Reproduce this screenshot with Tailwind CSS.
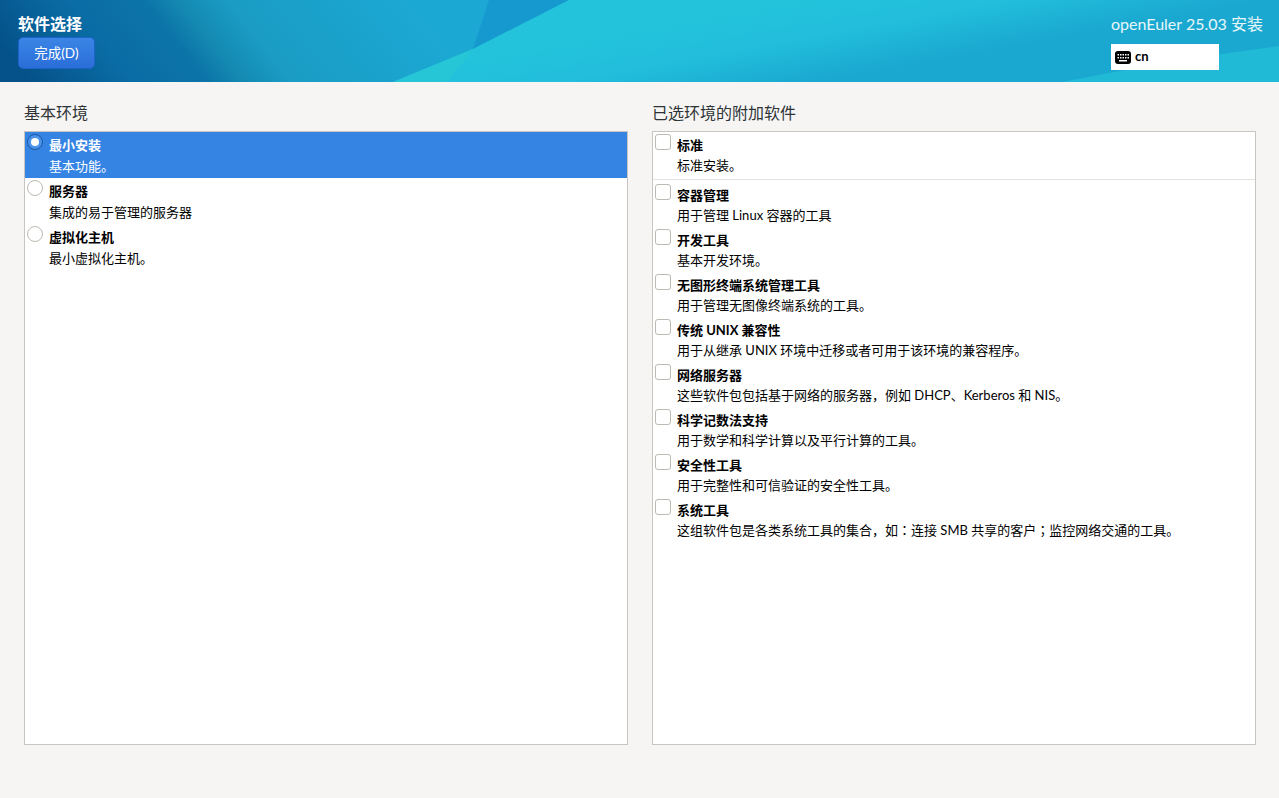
<!DOCTYPE html>
<html lang="zh-CN">
  <head>
    <meta charset="UTF-8" />
    <title>软件选择</title>
    <script src="https://cdn.jsdelivr.net/npm/@tailwindcss/browser@4"></script>
  </head>
  <body class="w-[1279px] h-[798px] overflow-hidden bg-[#f6f5f4] text-black font-['Lato','Noto_Sans_CJK_SC',sans-serif] text-[13px]">
    <!-- Header -->
    <header class="relative h-[82px] overflow-hidden flex justify-between text-white">
      <svg class="absolute inset-0" width="1279" height="82" viewBox="0 0 1279 82" preserveAspectRatio="none">
        <defs>
          <linearGradient id="base" gradientUnits="userSpaceOnUse" x1="0" y1="41" x2="300" y2="-197">
            <stop offset="0" stop-color="#05528a" />
            <stop offset="0.2" stop-color="#0a6ca4" />
            <stop offset="0.36" stop-color="#0c74a8" />
            <stop offset="0.43" stop-color="#1489b2" />
            <stop offset="0.53" stop-color="#1a9cc4" />
            <stop offset="0.9" stop-color="#1ba8d3" />
          </linearGradient>
          <linearGradient id="light" gradientUnits="userSpaceOnUse" x1="800" y1="0" x2="815" y2="82">
            <stop offset="0" stop-color="#23c3dc" />
            <stop offset="0.45" stop-color="#22bedc" />
            <stop offset="1" stop-color="#1aa8d0" />
          </linearGradient>
        </defs>
        <rect width="1279" height="82" fill="url(#base)" />
        <path d="M489 0 L569 0 L473 49 Z" fill="#1699cf" />
        <path d="M569 0 L1279 0 L1279 82 L393 82 L473 49 Z" fill="url(#light)" />
        <path d="M473 49 L447 82 L393 82 Z" fill="#26c6d6" />
        <path d="M1279 46 Q1170 60 1062 82 L1279 82 Z" fill="#20bad6" />
      </svg>
      <div class="relative pl-[18px] pt-[13px]">
        <h1 class="text-[16px] font-bold leading-[22px]">软件选择</h1>
        <button class="mt-[2px] w-[77px] h-[32px] pt-[2px] rounded-[5px] border border-[#1c62c8] bg-gradient-to-b from-[#3b85e6] to-[#2a6ed8] text-[13.5px] leading-none text-white">完成(D)</button>
      </div>
      <div class="relative pr-[17px] pt-[13px] w-[168px] shrink-0">
        <p class="text-[16px] leading-[22px] whitespace-nowrap text-right text-white/90">openEuler 25.03 安装</p>
        <div class="mt-[9px] w-[108px] h-[26px] bg-white flex items-center pl-[4px] gap-[4px] text-black">
          <svg width="16" height="13" viewBox="0 0 16 13">
            <rect width="16" height="13" rx="3" fill="#000" />
            <path d="M2.5 3h1.5v1.5H2.5zM5 3h1.5v1.5H5zM7.5 3H9v1.5H7.5zM10 3h1.5v1.5H10zM12.5 3H14v1.5h-1.5zM2.5 6h1.5v1.5H2.5zM5 6h1.5v1.5H5zM7.5 6H9v1.5H7.5zM10 6h1.5v1.5H10zM12.5 6H14v1.5h-1.5zM4 9h8v1.5H4z" fill="#fff" />
          </svg>
          <span class="text-[13px] font-bold">cn</span>
        </div>
      </div>
    </header>

    <!-- Main -->
    <main class="flex gap-[24px] pl-[24px] pt-[20px]">
      <section class="w-[604px]">
        <h2 class="text-[16px] leading-[22px] mb-[7px] text-[#2e3436]">基本环境</h2>
        <div class="h-[614px] border border-[#c8c4bf] bg-white">
          <div class="relative h-[46px] pl-[24px] pt-[3px] bg-[#3584e4] text-white">
            <span class="absolute left-[2px] top-[2px] w-[16px] h-[16px] rounded-full border border-[#1a56a0] bg-[#4a92ea] flex items-center justify-center">
              <span class="w-[8px] h-[8px] rounded-full bg-white"></span>
            </span>
            <p class="font-bold leading-[20px]">最小安装</p>
            <p class="leading-[22px]">基本功能。</p>
          </div>
          <div class="relative h-[46px] pl-[24px] pt-[3px]">
            <span class="absolute left-[2px] top-[2px] w-[16px] h-[16px] rounded-full border border-[#bdb9b3] bg-white"></span>
            <p class="font-bold leading-[20px]">服务器</p>
            <p class="leading-[22px]">集成的易于管理的服务器</p>
          </div>
          <div class="relative h-[46px] pl-[24px] pt-[3px]">
            <span class="absolute left-[2px] top-[2px] w-[16px] h-[16px] rounded-full border border-[#bdb9b3] bg-white"></span>
            <p class="font-bold leading-[20px]">虚拟化主机</p>
            <p class="leading-[22px]">最小虚拟化主机。</p>
          </div>
        </div>
      </section>

      <section class="w-[604px]">
        <h2 class="text-[16px] leading-[22px] mb-[7px] text-[#2e3436]">已选环境的附加软件</h2>
        <div class="h-[614px] border border-[#c8c4bf] bg-white">
          <div class="relative h-[48px] pl-[24px] pt-[3px] border-b border-[#e4e2df]">
            <span class="absolute left-[2px] top-[2px] w-[16px] h-[16px] rounded-[3px] border border-[#bdb9b3] bg-white"></span>
            <p class="font-bold leading-[20px]">标准</p>
            <p class="leading-[21px]">标准安装。</p>
          </div>
          <div class="pt-[4px]">
            <div class="relative h-[45px] pl-[24px] pt-[1px]">
              <span class="absolute left-[2px] top-0 w-[16px] h-[16px] rounded-[3px] border border-[#bdb9b3] bg-white"></span>
              <p class="font-bold leading-[20px]">容器管理</p>
              <p class="leading-[20px]">用于管理 Linux 容器的工具</p>
            </div>
            <div class="relative h-[45px] pl-[24px] pt-[1px]">
              <span class="absolute left-[2px] top-0 w-[16px] h-[16px] rounded-[3px] border border-[#bdb9b3] bg-white"></span>
              <p class="font-bold leading-[20px]">开发工具</p>
              <p class="leading-[20px]">基本开发环境。</p>
            </div>
            <div class="relative h-[45px] pl-[24px] pt-[1px]">
              <span class="absolute left-[2px] top-0 w-[16px] h-[16px] rounded-[3px] border border-[#bdb9b3] bg-white"></span>
              <p class="font-bold leading-[20px]">无图形终端系统管理工具</p>
              <p class="leading-[20px]">用于管理无图像终端系统的工具。</p>
            </div>
            <div class="relative h-[45px] pl-[24px] pt-[1px]">
              <span class="absolute left-[2px] top-0 w-[16px] h-[16px] rounded-[3px] border border-[#bdb9b3] bg-white"></span>
              <p class="font-bold leading-[20px]">传统 UNIX 兼容性</p>
              <p class="leading-[20px]">用于从继承 UNIX 环境中迁移或者可用于该环境的兼容程序。</p>
            </div>
            <div class="relative h-[45px] pl-[24px] pt-[1px]">
              <span class="absolute left-[2px] top-0 w-[16px] h-[16px] rounded-[3px] border border-[#bdb9b3] bg-white"></span>
              <p class="font-bold leading-[20px]">网络服务器</p>
              <p class="leading-[20px]">这些软件包包括基于网络的服务器，例如 DHCP、Kerberos 和 NIS。</p>
            </div>
            <div class="relative h-[45px] pl-[24px] pt-[1px]">
              <span class="absolute left-[2px] top-0 w-[16px] h-[16px] rounded-[3px] border border-[#bdb9b3] bg-white"></span>
              <p class="font-bold leading-[20px]">科学记数法支持</p>
              <p class="leading-[20px]">用于数学和科学计算以及平行计算的工具。</p>
            </div>
            <div class="relative h-[45px] pl-[24px] pt-[1px]">
              <span class="absolute left-[2px] top-0 w-[16px] h-[16px] rounded-[3px] border border-[#bdb9b3] bg-white"></span>
              <p class="font-bold leading-[20px]">安全性工具</p>
              <p class="leading-[20px]">用于完整性和可信验证的安全性工具。</p>
            </div>
            <div class="relative h-[45px] pl-[24px] pt-[1px]">
              <span class="absolute left-[2px] top-0 w-[16px] h-[16px] rounded-[3px] border border-[#bdb9b3] bg-white"></span>
              <p class="font-bold leading-[20px]">系统工具</p>
              <p class="leading-[20px]">这组软件包是各类系统工具的集合，如<span lang="zh-TW" class="font-['Noto_Sans_CJK_TC']">：</span>连接 SMB 共享的客户<span lang="zh-TW" class="font-['Noto_Sans_CJK_TC']">；</span>监控网络交通的工具。</p>
            </div>
          </div>
        </div>
      </section>
    </main>
  </body>
</html>
